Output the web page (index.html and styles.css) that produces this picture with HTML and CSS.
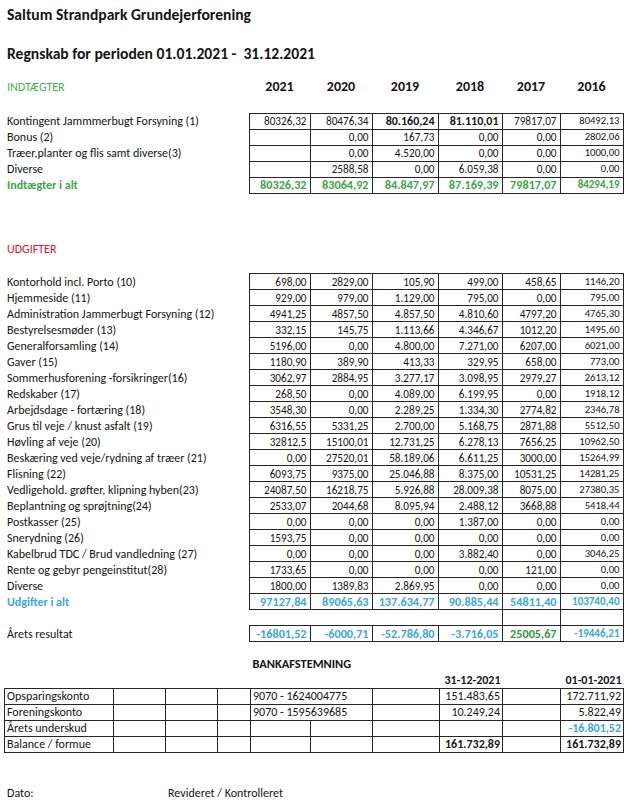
FILE: index.html
```html
<!DOCTYPE html>
<html lang="da">
<head>
<meta charset="utf-8">
<title>Regnskab 2021 – Saltum Strandpark Grundejerforening</title>
<link rel="stylesheet" href="styles.css">
</head>
<body>
<div class="page">
  <h1 class="title">Saltum Strandpark Grundejerforening</h1>
  <h2 class="period">Regnskab for perioden 01.01.2021 -&nbsp; 31.12.2021</h2>

  <table class="sheet income">
    <colgroup><col class="c-label"><col class="c-a"><col class="c-b"><col class="c-c"><col class="c-d"><col class="c-e"><col class="c-f"></colgroup>
    <tr class="head"><td class="label green">INDTÆGTER</td><th>2021</th><th>2020</th><th>2019</th><th>2018</th><th>2017</th><th>2016</th></tr>
    <tr class="spacer"><td colspan="7"></td></tr>
    <tr><td class="label">Kontingent Jammmerbugt Forsyning (1)</td><td class="n">80326,32</td><td class="n">80476,34</td><td class="n b">80.160,24</td><td class="n b">81.110,01</td><td class="n">79817,07</td><td class="n s">80492,13</td></tr>
    <tr><td class="label">Bonus (2)</td><td class="n"></td><td class="n">0,00</td><td class="n">167,73</td><td class="n">0,00</td><td class="n">0,00</td><td class="n s">2802,06</td></tr>
    <tr><td class="label">Træer,planter og flis samt diverse(3)</td><td class="n"></td><td class="n">0,00</td><td class="n">4.520,00</td><td class="n">0,00</td><td class="n">0,00</td><td class="n s">1000,00</td></tr>
    <tr><td class="label">Diverse</td><td class="n"></td><td class="n">2588,58</td><td class="n">0,00</td><td class="n">6.059,38</td><td class="n">0,00</td><td class="n s">0,00</td></tr>
    <tr class="total-green"><td class="label">Indtægter i alt</td><td class="n">80326,32</td><td class="n">83064,92</td><td class="n">84.847,97</td><td class="n">87.169,39</td><td class="n">79817,07</td><td class="n s">84294,19</td></tr>
  </table>

  <table class="sheet expense">
    <colgroup><col class="c-label"><col class="c-a"><col class="c-b"><col class="c-c"><col class="c-d"><col class="c-e"><col class="c-f"></colgroup>
    <tr class="head"><td class="label red">UDGIFTER</td><td colspan="6"></td></tr>
    <tr class="spacer2"><td colspan="7"></td></tr>
    <tr><td class="label">Kontorhold incl. Porto (10)</td><td class="n">698,00</td><td class="n">2829,00</td><td class="n">105,90</td><td class="n">499,00</td><td class="n">458,65</td><td class="n s">1146,20</td></tr>
    <tr><td class="label">Hjemmeside (11)</td><td class="n">929,00</td><td class="n">979,00</td><td class="n">1.129,00</td><td class="n">795,00</td><td class="n">0,00</td><td class="n s">795,00</td></tr>
    <tr><td class="label">Administration Jammerbugt Forsyning (12)</td><td class="n">4941,25</td><td class="n">4857,50</td><td class="n">4.857,50</td><td class="n">4.810,60</td><td class="n">4797,20</td><td class="n s">4765,30</td></tr>
    <tr><td class="label">Bestyrelsesmøder (13)</td><td class="n">332,15</td><td class="n">145,75</td><td class="n">1.113,66</td><td class="n">4.346,67</td><td class="n">1012,20</td><td class="n s">1495,60</td></tr>
    <tr><td class="label">Generalforsamling (14)</td><td class="n">5196,00</td><td class="n">0,00</td><td class="n">4.800,00</td><td class="n">7.271,00</td><td class="n">6207,00</td><td class="n s">6021,00</td></tr>
    <tr><td class="label">Gaver (15)</td><td class="n">1180,90</td><td class="n">389,90</td><td class="n">413,33</td><td class="n">329,95</td><td class="n">658,00</td><td class="n s">773,00</td></tr>
    <tr><td class="label">Sommerhusforening -forsikringer(16)</td><td class="n">3062,97</td><td class="n">2884,95</td><td class="n">3.277,17</td><td class="n">3.098,95</td><td class="n">2979,27</td><td class="n s">2613,12</td></tr>
    <tr><td class="label">Redskaber (17)</td><td class="n">268,50</td><td class="n">0,00</td><td class="n">4.089,00</td><td class="n">6.199,95</td><td class="n">0,00</td><td class="n s">1918,12</td></tr>
    <tr><td class="label">Arbejdsdage - fortæring (18)</td><td class="n">3548,30</td><td class="n">0,00</td><td class="n">2.289,25</td><td class="n">1.334,30</td><td class="n">2774,82</td><td class="n s">2346,78</td></tr>
    <tr><td class="label">Grus til veje / knust asfalt (19)</td><td class="n">6316,55</td><td class="n">5331,25</td><td class="n">2.700,00</td><td class="n">5.168,75</td><td class="n">2871,88</td><td class="n s">5512,50</td></tr>
    <tr><td class="label">Høvling af veje (20)</td><td class="n">32812,5</td><td class="n">15100,01</td><td class="n">12.731,25</td><td class="n">6.278,13</td><td class="n">7656,25</td><td class="n s">10962,50</td></tr>
    <tr><td class="label">Beskæring ved veje/rydning af træer (21)</td><td class="n">0,00</td><td class="n">27520,01</td><td class="n">58.189,06</td><td class="n">6.611,25</td><td class="n">3000,00</td><td class="n s">15264,99</td></tr>
    <tr><td class="label">Flisning (22)</td><td class="n">6093,75</td><td class="n">9375,00</td><td class="n">25.046,88</td><td class="n">8.375,00</td><td class="n">10531,25</td><td class="n s">14281,25</td></tr>
    <tr><td class="label">Vedligehold. grøfter, klipning hyben(23)</td><td class="n">24087,50</td><td class="n">16218,75</td><td class="n">5.926,88</td><td class="n">28.009,38</td><td class="n">8075,00</td><td class="n s">27380,35</td></tr>
    <tr><td class="label">Beplantning og sprøjtning(24)</td><td class="n">2533,07</td><td class="n">2044,68</td><td class="n">8.095,94</td><td class="n">2.488,12</td><td class="n">3668,88</td><td class="n s">5418,44</td></tr>
    <tr><td class="label">Postkasser (25)</td><td class="n">0,00</td><td class="n">0,00</td><td class="n">0,00</td><td class="n">1.387,00</td><td class="n">0,00</td><td class="n s">0,00</td></tr>
    <tr><td class="label">Snerydning (26)</td><td class="n">1593,75</td><td class="n">0,00</td><td class="n">0,00</td><td class="n">0,00</td><td class="n">0,00</td><td class="n s">0,00</td></tr>
    <tr><td class="label">Kabelbrud TDC / Brud vandledning (27)</td><td class="n">0,00</td><td class="n">0,00</td><td class="n">0,00</td><td class="n">3.882,40</td><td class="n">0,00</td><td class="n s">3046,25</td></tr>
    <tr><td class="label">Rente og gebyr pengeinstitut(28)</td><td class="n">1733,65</td><td class="n">0,00</td><td class="n">0,00</td><td class="n">0,00</td><td class="n">121,00</td><td class="n s">0,00</td></tr>
    <tr><td class="label">Diverse</td><td class="n">1800,00</td><td class="n">1389,83</td><td class="n">2.869,95</td><td class="n">0,00</td><td class="n">0,00</td><td class="n s">0,00</td></tr>
    <tr class="total-blue"><td class="label">Udgifter i alt</td><td class="n">97127,84</td><td class="n">89065,63</td><td class="n">137.634,77</td><td class="n">90.885,44</td><td class="n">54811,40</td><td class="n s">103740,40</td></tr>
    <tr class="gap"><td></td><td></td><td></td><td></td><td></td><td class="vline"></td><td class="vline"></td></tr>
    <tr class="result"><td class="label">Årets resultat</td><td class="n">-16801,52</td><td class="n">-6000,71</td><td class="n">-52.786,80</td><td class="n">-3.716,05</td><td class="n pos">25005,67</td><td class="n s">-19446,21</td></tr>
  </table>

  <table class="bank">
    <colgroup><col class="k-a"><col class="k-b"><col class="k-c"><col class="k-d"><col class="k-e"><col class="k-f"><col class="k-g"><col class="k-h"><col class="k-i"><col class="k-j"></colgroup>
    <tr class="bank-title"><td colspan="4"></td><td colspan="6" class="bt">BANKAFSTEMNING</td></tr>
    <tr class="bank-dates"><td colspan="7"></td><td class="r bt">31-12-2021</td><td></td><td class="r bt">01-01-2021</td></tr>
    <tr class="row"><td>Opsparingskonto</td><td></td><td></td><td></td><td colspan="2">9070 - 1624004775</td><td></td><td class="r">151.483,65</td><td></td><td class="r">172.711,92</td></tr>
    <tr class="row"><td>Foreningskonto</td><td></td><td></td><td></td><td colspan="2">9070 - 1595639685</td><td></td><td class="r">10.249,24</td><td></td><td class="r">5.822,49</td></tr>
    <tr class="row"><td>Årets underskud</td><td></td><td></td><td></td><td></td><td></td><td></td><td></td><td></td><td class="r bt neg">-16.801,52</td></tr>
    <tr class="row"><td>Balance / formue</td><td></td><td></td><td></td><td></td><td></td><td></td><td class="r bt">161.732,89</td><td></td><td class="r bt">161.732,89</td></tr>
  </table>

  <div class="sign">
    <span>Dato:</span>
    <span>Revideret / Kontrolleret</span>
  </div>
</div>
</body>
</html>
```

FILE: styles.css
```css
* { box-sizing: border-box; }
html, body { margin: 0; padding: 0; background: #ffffff; }
body {
  font-family: Carlito, Calibri, Lato, "Liberation Sans", sans-serif;
  font-size: 12px;
  color: #141414;
}
.page { width: 633px; padding-top: 6px; }

.title, .period {
  margin: 0 0 0 7px;
  font-size: 15.6px;
  line-height: 18px;
  font-weight: 700;
}
.period { margin-top: 21px; }

.sheet {
  border-collapse: collapse;
  table-layout: fixed;
  width: 623px;
}
.c-label { width: 249px; }
.c-a { width: 61px; }
.c-b { width: 62px; }
.c-c { width: 66px; }
.c-d { width: 64px; }
.c-e { width: 58px; }
.c-f { width: 63px; }

.sheet td, .sheet th {
  padding: 0;
  height: 16px;
  line-height: 14px;
  white-space: nowrap;
  overflow: hidden;
}
.sheet th { font-weight: 700; font-size: 14px; text-align: center; }
.sheet .label { padding-left: 7px; text-align: left; }

.income { margin-top: 16px; }
.spacer td { height: 18px; }
.expense { margin-top: 47px; }
.spacer2 td { height: 17px; }

.n {
  border: 1px solid #262626;
  text-align: right;
  padding-right: 3px !important;
  font-size: 11.2px;
}
.s { font-size: 10.6px; }
.b { font-weight: 700; font-size: 12px; }

.green { color: #3db54a; }
.red { color: #e3141d; }

.total-green td { color: #37a845; font-weight: 700; }
.total-blue td { color: #3aa7df; font-weight: 700; }
.total-green .n, .total-blue .n, .result .n { font-size: 12.2px; }
.total-green .n.s, .total-blue .n.s, .result .n.s { font-size: 11px; }
.result .n { color: #3aa7df; font-weight: 700; }
.result .n.pos { color: #339a3a; }
.gap .vline { border-left: 1px solid #262626; border-right: 1px solid #262626; }

.bank {
  border-collapse: collapse;
  table-layout: fixed;
  width: 619px;
  margin: 14px 0 0 4px;
}
.k-a { width: 109px; }
.k-b { width: 52px; }
.k-c { width: 52px; }
.k-d { width: 33px; }
.k-e { width: 60px; }
.k-f { width: 62px; }
.k-g { width: 67px; }
.k-h { width: 63px; }
.k-i { width: 58px; }
.k-j { width: 63px; }

.bank td {
  padding: 0 2px;
  height: 16px;
  line-height: 14px;
  white-space: nowrap;
  overflow: hidden;
  text-align: left;
}
.bank-title td { font-size: 12.4px; }
.bank-dates td { height: 16px; }
.bank .row td { border: 1px solid #262626; }
.bank .r { text-align: right; }
.bank .bt { font-weight: 700; }
.bank .neg { color: #3aa7df; }

.sign {
  display: grid;
  grid-template-columns: 161px auto;
  padding-left: 7px;
  margin-top: 32px;
  line-height: 16px;
}
```
